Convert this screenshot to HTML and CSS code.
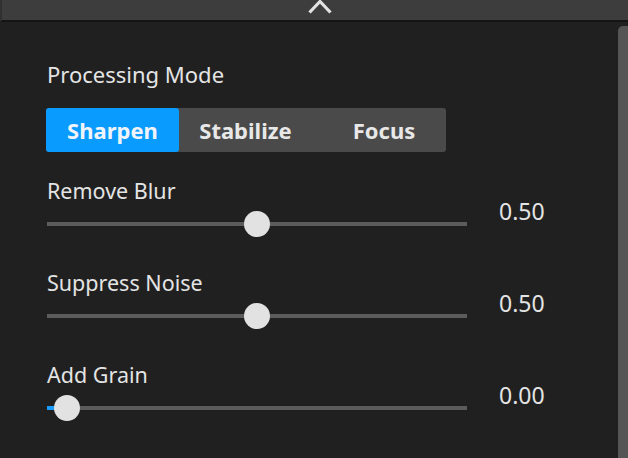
FILE: index.html
```html
<!DOCTYPE html>
<html>
<head>
<meta charset="utf-8">
<link rel="stylesheet" href="styles.css">
</head>
<body>
<div class="topbar">
  <svg class="chev" width="26" height="15" viewBox="0 0 26 15"><path d="M2.5 13.5 L13 2.5 L23.5 13.5" fill="none" stroke="#e2e2e2" stroke-width="3.2"/></svg>
</div>
<div class="main">
  <div class="content">
    <div class="section-label">Processing Mode</div>
    <div class="segmented">
      <div class="seg active">Sharpen</div>
      <div class="seg">Stabilize</div>
      <div class="seg seg-last">Focus</div>
    </div>
    <div class="slider-group">
      <div class="slider-col">
        <div class="label">Remove Blur</div>
        <div class="track">
          <div class="thumb" style="left:197px"></div>
        </div>
      </div>
      <div class="value">0.50</div>
    </div>
    <div class="slider-group">
      <div class="slider-col">
        <div class="label">Suppress Noise</div>
        <div class="track">
          <div class="thumb" style="left:197px"></div>
        </div>
      </div>
      <div class="value">0.50</div>
    </div>
    <div class="slider-group">
      <div class="slider-col">
        <div class="label">Add Grain</div>
        <div class="track">
          <div class="fill" style="width:10px"></div>
          <div class="thumb" style="left:7px"></div>
        </div>
      </div>
      <div class="value">0.00</div>
    </div>
  </div>
  <div class="scrollbar"></div>
</div>
</body>
</html>
```
FILE: styles.css
```css
html, body {
  margin: 0;
  padding: 0;
  background: #202020;
  width: 628px;
  height: 458px;
  overflow: hidden;
  font-family: "Noto Sans", "Open Sans", sans-serif;
  color: #e4e4e4;
}
.topbar {
  height: 20px;
  background: #3d3d3d;
  border-bottom: 2px solid #141414;
  border-left: 2px solid #303030;
  display: flex;
  justify-content: center;
  align-items: flex-start;
}
.chev {
  display: block;
  margin-left: 10px;
  margin-top: -1px;
}
.main {
  display: flex;
  height: 436px;
}
.content {
  flex: 1;
  padding-left: 47px;
  padding-top: 38px;
}
.scrollbar {
  width: 10px;
  margin-top: 4px;
  background: #555555;
  border-top-left-radius: 5px;
}
.section-label {
  font-size: 22px;
  line-height: 28px;
}
.segmented {
  margin-top: 20px;
  margin-left: -1px;
  width: 400px;
  height: 44px;
  display: flex;
  background: #4a4a4a;
  border-radius: 3px;
}
.seg {
  flex: none;
  width: 133px;
  box-sizing: border-box;
  display: flex;
  align-items: center;
  justify-content: center;
  font-weight: 700;
  font-size: 22px;
  color: #e8e8e8;
  border-radius: 3px;
}
.seg-last {
  width: 134px;
  padding-left: 10px;
}
.seg.active {
  background: #0a9bff;
  color: #f0f4f8;
}
.slider-group {
  display: flex;
  align-items: flex-start;
  margin-top: 25px;
}
.slider-group + .slider-group {
  margin-top: 43px;
}
.slider-col {
  width: 420px;
}
.label {
  font-size: 21.5px;
  line-height: 28px;
}
.track {
  position: relative;
  margin-top: 17px;
  height: 4px;
  background: #5c5c5c;
}
.fill {
  position: absolute;
  left: 0;
  top: 0;
  height: 4px;
  background: #1a9cff;
}
.thumb {
  position: absolute;
  top: -11px;
  width: 26px;
  height: 26px;
  border-radius: 50%;
  background: #e2e2e2;
}
.value {
  margin-left: 32px;
  font-size: 23px;
  line-height: 30px;
  padding-top: 19px;
}
```
